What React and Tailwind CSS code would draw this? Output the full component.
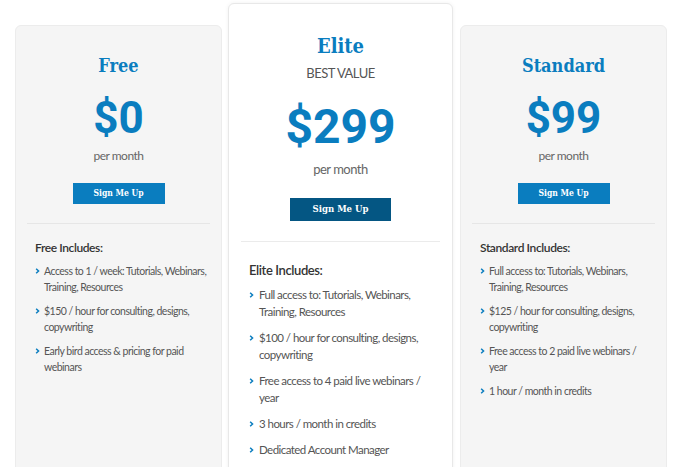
const plans = [
  {
    name: "Free",
    price: "$0",
    items: [
      "Access to 1 / week: Tutorials, Webinars, Training, Resources",
      "$150 / hour for consulting, designs, copywriting",
      "Early bird access & pricing for paid webinars",
    ],
  },
  {
    name: "Elite",
    price: "$299",
    featured: true,
    items: [
      "Full access to: Tutorials, Webinars, Training, Resources",
      "$100 / hour for consulting, designs, copywriting",
      "Free access to 4 paid live webinars / year",
      "3 hours / month in credits",
      "Dedicated Account Manager",
    ],
  },
  {
    name: "Standard",
    price: "$99",
    items: [
      "Full access to: Tutorials, Webinars, Training, Resources",
      "$125 / hour for consulting, designs, copywriting",
      "Free access to 2 paid live webinars / year",
      "1 hour / month in credits",
    ],
  },
];

const slab = { fontFamily: '"DejaVu Serif Condensed", "DejaVu Serif", serif', fontStretch: "condensed" };

function Chevron({ big }) {
  return (
    <svg
      viewBox="0 0 6 8"
      className={big ? "mt-[6px] h-[6px] w-[5px] shrink-0" : "mt-[5px] h-[6px] w-[5px] shrink-0"}
    >
      <path d="M1.2 1 L4.4 4 L1.2 7" fill="none" stroke="#0a7dbf" strokeWidth="2" />
    </svg>
  );
}

function SideCard({ plan }) {
  return (
    <div className="mt-[25px] h-[470px] w-[207px] shrink-0 rounded-md border border-[#ececec] bg-[#f5f5f5]">
      <div className="flex flex-col items-center pt-[28px]">
        <h2 style={slab} className="text-[18px] font-bold leading-[24px] text-[#0a7dbf]">
          {plan.name}
        </h2>
        <div className="mt-[16px] font-['Roboto',sans-serif] text-[44px] font-bold leading-[48px] text-[#0a7dbf]">
          {plan.price}
        </div>
        <div className="mt-[6px] font-['Lato',sans-serif] text-[12px] leading-[16px] tracking-[-0.5px] text-[#666]">
          per month
        </div>
        <button
          style={slab}
          className="mt-[19px] h-[21px] w-[92px] bg-[#0a7dbf] text-[8.5px] font-bold text-white"
        >
          Sign Me Up
        </button>
      </div>
      <div className="mx-[11px] mt-[19px] h-px bg-[#e6e6e6]" />
      <div className="pl-[19px] pr-[10px] pt-[15px] font-['Lato',sans-serif]">
        <h3 className="text-[12px] font-semibold leading-[18px] tracking-[-0.4px] text-[#333]">
          {plan.name} Includes:
        </h3>
        <ul className="mt-[6px] flex flex-col gap-[8px]">
          {plan.items.map((item) => (
            <li
              key={item}
              className="flex gap-[4px] text-[10.5px] leading-[16px] tracking-[-0.5px] text-[#555]"
            >
              <Chevron />
              <span>{item}</span>
            </li>
          ))}
        </ul>
      </div>
    </div>
  );
}

function FeaturedCard({ plan }) {
  return (
    <div className="mt-[3px] h-[490px] w-[225px] shrink-0 rounded-md border border-[#e8e8e8] bg-white shadow-[0_0_4px_rgba(0,0,0,0.06)]">
      <div className="flex flex-col items-center pt-[29px]">
        <h2 style={slab} className="text-[20px] font-bold leading-[26px] text-[#0a7dbf]">
          {plan.name}
        </h2>
        <div className="mt-[5px] font-['Lato',sans-serif] text-[13px] leading-[18px] tracking-[-0.5px] text-[#555]">
          BEST VALUE
        </div>
        <div className="mt-[19px] font-['Roboto',sans-serif] text-[48px] font-bold leading-[52px] text-[#0a7dbf]">
          {plan.price}
        </div>
        <div className="mt-[7px] font-['Lato',sans-serif] text-[13px] leading-[18px] tracking-[-0.5px] text-[#666]">
          per month
        </div>
        <button
          style={slab}
          className="mt-[20px] h-[23px] w-[101px] bg-[#045683] text-[9.5px] font-bold text-white"
        >
          Sign Me Up
        </button>
      </div>
      <div className="mx-[12px] mt-[20px] h-px bg-[#ebebeb]" />
      <div className="pl-[20px] pr-[14px] pt-[18px] font-['Lato',sans-serif]">
        <h3 className="text-[13px] font-semibold leading-[20px] tracking-[-0.4px] text-[#333]">
          {plan.name} Includes:
        </h3>
        <ul className="mt-[6px] flex flex-col gap-[9px]">
          {plan.items.map((item) => (
            <li
              key={item}
              className="flex gap-[5px] text-[11.5px] leading-[17px] tracking-[-0.55px] text-[#555]"
            >
              <Chevron big />
              <span>{item}</span>
            </li>
          ))}
        </ul>
      </div>
    </div>
  );
}

export default function App() {
  return (
    <div className="h-[467px] w-[680px] overflow-hidden bg-white">
      <div className="flex items-start gap-[6px] pl-[15px]">
        <SideCard plan={plans[0]} />
        <FeaturedCard plan={plans[1]} />
        <div className="ml-px">
          <SideCard plan={plans[2]} />
        </div>
      </div>
    </div>
  );
}
